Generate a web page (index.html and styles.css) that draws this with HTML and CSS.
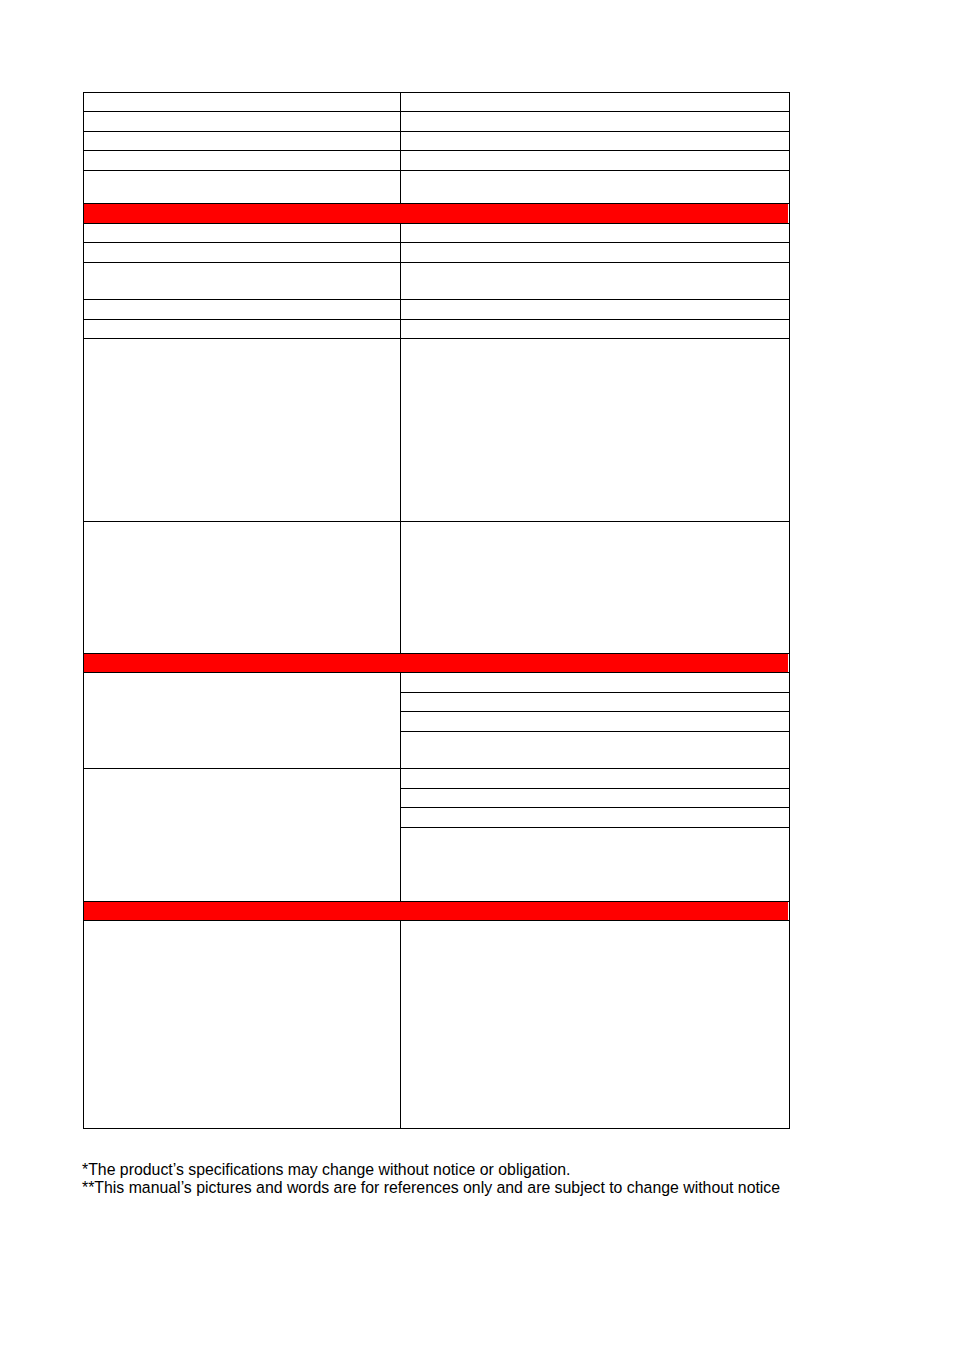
FILE: index.html
```html
<!DOCTYPE html>
<html lang="en">
<head>
<meta charset="utf-8">
<title>Specifications</title>
<link rel="stylesheet" href="styles.css">
</head>
<body>
<main class="page">
  <div class="spec">
    <div class="cell h19"></div><div class="cell h19"></div>
    <div class="cell h20"></div><div class="cell h20"></div>
    <div class="cell h19"></div><div class="cell h19"></div>
    <div class="cell h20"></div><div class="cell h20"></div>
    <div class="cell h33"></div><div class="cell h33"></div>

    <div class="cell band h20"></div>

    <div class="cell h19"></div><div class="cell h19"></div>
    <div class="cell h20"></div><div class="cell h20"></div>
    <div class="cell h37"></div><div class="cell h37"></div>
    <div class="cell h20"></div><div class="cell h20"></div>
    <div class="cell h19"></div><div class="cell h19"></div>
    <div class="cell h183"></div><div class="cell h183"></div>
    <div class="cell h132"></div><div class="cell h132"></div>

    <div class="cell band h19"></div>

    <div class="cell span4"></div>
    <div class="cell h20"></div>
    <div class="cell h19"></div>
    <div class="cell h20"></div>
    <div class="cell h37"></div>

    <div class="cell span4"></div>
    <div class="cell h20"></div>
    <div class="cell h19"></div>
    <div class="cell h20"></div>
    <div class="cell h74"></div>

    <div class="cell band h19"></div>

    <div class="cell h208"></div><div class="cell h208"></div>
  </div>

  <div class="notes">
    <p>*The product’s specifications may change without notice or obligation.</p>
    <p>**This manual’s pictures and words are for references only and are subject to change without notice</p>
  </div>
</main>
</body>
</html>
```

FILE: styles.css
```css
html, body {
  margin: 0;
  padding: 0;
  background: #ffffff;
}

.page {
  padding: 92px 0 0 83px;
  font-family: "Liberation Sans", Arial, sans-serif;
  color: #000000;
}

.spec {
  display: grid;
  grid-template-columns: 317px 389px;
  width: 707px;
  border-top: 1px solid #000;
  border-left: 1px solid #000;
  box-sizing: border-box;
}

.cell {
  box-sizing: border-box;
  border-right: 1px solid #000;
  border-bottom: 1px solid #000;
}

.band {
  grid-column: 1 / span 2;
  background: #ff0000;
  box-shadow: inset -1px 0 0 #ffffff;
}

.span4 {
  grid-row: span 4;
}

.h19 { height: 19px; }
.h20 { height: 20px; }
.h33 { height: 33px; }
.h37 { height: 37px; }
.h74 { height: 74px; }
.h132 { height: 132px; }
.h183 { height: 183px; }
.h208 { height: 208px; }

.notes {
  margin-top: 32px;
  margin-left: -1px;
  font-size: 15.85px;
  line-height: 18px;
}

.notes p {
  margin: 0;
  white-space: nowrap;
}
```
